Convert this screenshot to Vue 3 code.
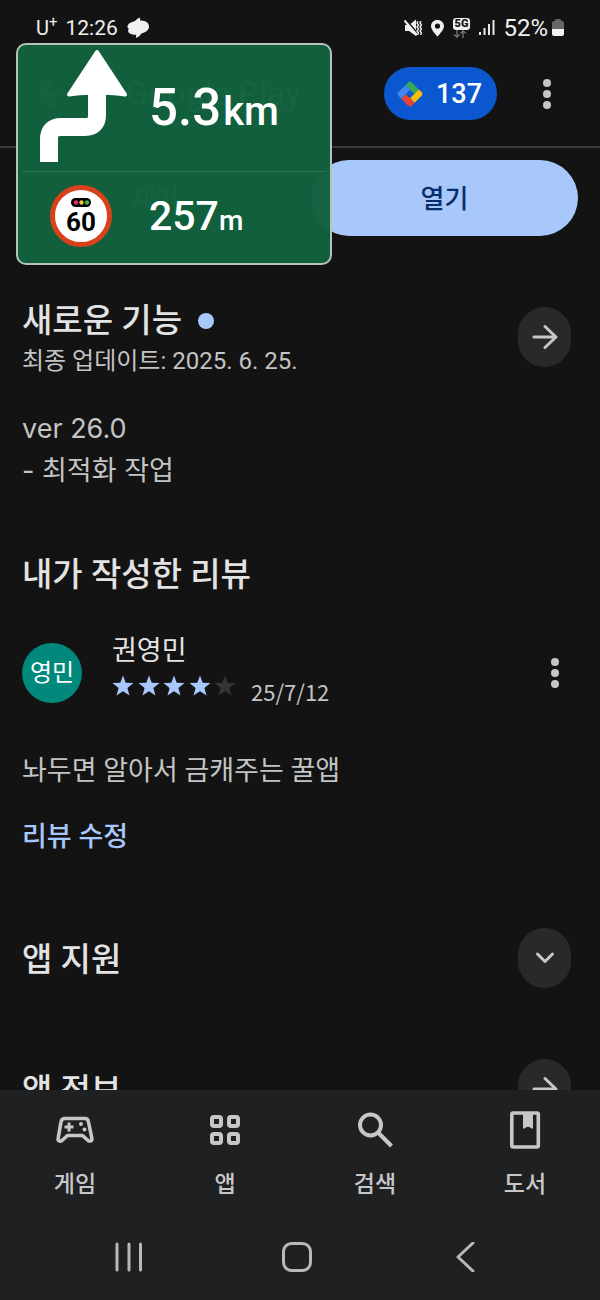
<script setup>
const stars = [true, true, true, true, false]
const tabs = [
  { id: 'games', label: '게임' },
  { id: 'apps', label: '앱' },
  { id: 'search', label: '검색' },
  { id: 'books', label: '도서' },
]
</script>

<template>
  <div class="screen">
    <div class="status">
      <div class="status-side">
        <span class="carrier">U<sup>+</sup></span>
        <span class="clock">12:26</span>
        <svg width="24" height="22" viewBox="0 0 24 22" aria-hidden="true">
          <path d="M13.500 0.500 Q14.800 2 14 3.500 C20 3 23.500 6.500 23 10 C22.500 14 18.500 15.500 15.500 16.500 Q14 19 10.500 21 Q9.500 19.500 10.300 17.800 C5 18 2 16 2 13.500 Q2 12.500 3 12 Q1 11 1.500 9 C2.500 6 6 5 9 4 Q11 1.500 13.500 0.500 Z" fill="#f0f0f0" />
        </svg>
      </div>
      <div class="status-side right">
        <svg width="18" height="18" viewBox="0 0 18 18" aria-hidden="true">
          <path d="M1 6 H5 L12 0.500 V17 L5 12 H1 Z" fill="#eee" />
          <path d="M1 0 L13 14" stroke="#131313" stroke-width="2" />
          <path d="M0.500 1.500 L13 16" stroke="#eee" stroke-width="2" />
          <path d="M14 2 l-1 2 1.500 2 -1.500 2 1.500 2 -1.500 2 1.500 2 -1 2 M17 2 l-1 2 1.500 2 -1.500 2 1.500 2 -1.500 2 1.500 2 -1 2" fill="none" stroke="#eee" stroke-width="1.400" />
        </svg>
        <svg width="15" height="18" viewBox="0 0 15 18" aria-hidden="true">
          <path d="M7.500 1 C3.700 1 1 3.700 1 7.200 C1 11 7.500 17.500 7.500 17.500 C7.500 17.500 14 11 14 7.200 C14 3.700 11.300 1 7.500 1 Z M7.500 4.500 A2.600 2.600 0 1 1 7.500 9.700 A2.600 2.600 0 1 1 7.500 4.500" fill="#f0f0f0" fill-rule="evenodd" />
        </svg>
        <div class="network">
          <span class="network-type">5G</span>
          <svg width="14" height="8" viewBox="0 0 14 8" aria-hidden="true">
            <path d="M4 0 V7 M1 4.500 L4 7.200 L6.500 4.500" fill="none" stroke="#777" stroke-width="1.300" />
            <path d="M10 8 V1 M7.500 3.500 L10 0.800 L13 3.500" fill="none" stroke="#777" stroke-width="1.300" />
          </svg>
        </div>
        <svg width="17" height="17" viewBox="0 0 17 17" aria-hidden="true">
          <path d="M2 13 V16 M6.500 9 V16 M11 5 V16 M15.500 1 V16" stroke="#e8e8e8" stroke-width="2" />
        </svg>
        <span class="percent">52%</span>
        <svg width="12" height="18" viewBox="0 0 12 18" aria-hidden="true">
          <path d="M3 1 Q3 0 4 0 H8 Q9 0 9 1 V2 H10 Q12 2 12 4 V10 H0 V4 Q0 2 2 2 H3 Z" fill="#666" />
          <path d="M0 10 H12 V15 Q12 17 10 17 H2 Q0 17 0 15 Z" fill="#f2f2f2" />
        </svg>
      </div>
    </div>

    <header class="header">
      <button class="icon-button" aria-label="뒤로">
        <svg width="22" height="30" viewBox="0 0 22 30" aria-hidden="true">
          <path d="M21 15 H3 M15 2 L2 15 L15 28" fill="none" stroke="#c6c6c6" stroke-width="3" />
        </svg>
      </button>
      <span class="brand">Google Play</span>
      <button class="points">
        <svg width="28" height="28" viewBox="0 0 28 28" aria-hidden="true">
          <g transform="rotate(45 14 14)">
            <path d="M4.500 11 V7 Q4.500 4.500 7 4.500 H17 V11 Z" fill="#34a853" />
            <path d="M17 4.500 H21 Q23.500 4.500 23.500 7 V17 H17 Z" fill="#fbbc04" />
            <path d="M11 17 H23.500 V21 Q23.500 23.500 21 23.500 H11 Z" fill="#ea4335" />
            <path d="M4.500 11 H11 V23.500 H7 Q4.500 23.500 4.500 21 Z" fill="#4285f4" />
          </g>
        </svg>
        <span>137</span>
      </button>
      <button class="icon-button more" aria-label="옵션 더보기">
        <svg width="8" height="32" viewBox="0 0 8 32" fill="#c6c6c6" aria-hidden="true">
          <circle cx="4" cy="5" r="4" /><circle cx="4" cy="16" r="4" /><circle cx="4" cy="27" r="4" />
        </svg>
      </button>
    </header>

    <main class="content">
      <div class="actions">
        <button class="action outline">제거</button>
        <button class="action filled">열기</button>
      </div>

      <section class="news">
        <div class="row">
          <div class="heading">
            <h2 class="with-dot">새로운 기능 <span class="dot"></span></h2>
            <p class="updated">최종 업데이트: 2025. 6. 25.</p>
          </div>
          <button class="round" aria-label="새로운 기능 더보기">
            <svg width="26" height="26" viewBox="0 0 26 26" aria-hidden="true">
              <path d="M2 13 H23 M13 2.500 L24 13 L13 23.500" class="stroke" />
            </svg>
          </button>
        </div>
        <p class="notes">ver 26.0<br />- 최적화 작업</p>
      </section>

      <section class="review">
        <h2>내가 작성한 리뷰</h2>
        <div class="reviewer">
          <div class="avatar">영민</div>
          <div class="who">
            <div class="name">권영민</div>
            <div class="rating">
              <div class="stars" role="img" aria-label="별표 5개 중 4개">
                <svg v-for="(on, i) in stars" :key="i" :class="{ off: !on }" width="22" height="22" viewBox="0 0 22 22">
                  <path d="M11 0.500 L13.700 7.800 L21.500 8.100 L15.400 12.900 L17.500 20.500 L11 16.200 L4.500 20.500 L6.600 12.900 L0.500 8.100 L8.300 7.800 Z" />
                </svg>
              </div>
              <span class="date">25/7/12</span>
            </div>
          </div>
          <button class="icon-button" aria-label="리뷰 옵션">
            <svg width="8" height="32" viewBox="0 0 8 32" fill="#c6c6c6" aria-hidden="true">
              <circle cx="4" cy="5" r="4" /><circle cx="4" cy="16" r="4" /><circle cx="4" cy="27" r="4" />
            </svg>
          </button>
        </div>
        <p class="comment">놔두면 알아서 금캐주는 꿀앱</p>
        <a class="edit" href="#">리뷰 수정</a>
      </section>

      <section class="row support">
        <h2 class="heading">앱 지원</h2>
        <button class="round" aria-label="앱 지원 펼치기">
          <svg width="26" height="26" viewBox="0 0 26 26" aria-hidden="true">
            <path d="M5.500 9 L13 16.500 L20.500 9" class="stroke" />
          </svg>
        </button>
      </section>
      <section class="row info">
        <h2 class="heading">앱 정보</h2>
        <button class="round" aria-label="앱 정보 더보기">
          <svg width="26" height="26" viewBox="0 0 26 26" aria-hidden="true">
            <path d="M2 13 H23 M13 2.500 L24 13 L13 23.500" class="stroke" />
          </svg>
        </button>
      </section>
    </main>

    <footer class="bottom">
      <nav class="tabs">
        <button v-for="tab in tabs" :key="tab.id" class="tab">
          <svg width="40" height="40" viewBox="0 0 40 40" fill="none" stroke="#c7c7c9" aria-hidden="true">
            <g v-if="tab.id === 'games'">
              <path d="M10 8.500 H30 Q33 8.500 33.500 12 L36.800 28 Q37.500 31.500 34.500 31 Q33.500 31 32.500 30 L27.500 25.500 H12.500 L7.500 30 Q6 31.500 4.500 31 Q2.500 30.500 3.200 28 L6 12 Q6.500 8.500 10 8.500 Z" stroke-width="3.600" stroke-linejoin="round" />
              <path d="M9.500 17 H18.500 M14 12.500 V21.500" stroke-width="3" />
              <circle cx="26" cy="14" r="2" fill="#c7c7c9" stroke="none" />
              <circle cx="29.500" cy="19.500" r="2" fill="#c7c7c9" stroke="none" />
            </g>
            <g v-else-if="tab.id === 'apps'" stroke-width="4">
              <rect x="7" y="7" width="9" height="9" rx="2" />
              <rect x="24" y="7" width="9" height="9" rx="2" />
              <rect x="7" y="24" width="9" height="9" rx="2" />
              <rect x="24" y="24" width="9" height="9" rx="2" />
            </g>
            <g v-else-if="tab.id === 'search'" stroke-width="4">
              <circle cx="15.500" cy="15" r="10.500" />
              <path d="M23 22.500 L36.500 36" />
            </g>
            <g v-else>
              <rect x="6.800" y="3" width="26.500" height="34" rx="1.500" stroke-width="3.600" />
              <path d="M18 4 H28 V18.500 H26.500 L24.500 17 H21.500 L19.500 18.500 H18 Z" fill="#c7c7c9" stroke="none" />
            </g>
          </svg>
          <span>{{ tab.label }}</span>
        </button>
      </nav>
      <div class="system">
        <button aria-label="최근 앱">
          <svg width="30" height="30" viewBox="0 0 30 30" aria-hidden="true">
            <path d="M3 2 V28 M15 2 V28 M26.500 2 V28" class="sys" />
          </svg>
        </button>
        <button aria-label="홈">
          <svg width="30" height="30" viewBox="0 0 30 30" aria-hidden="true">
            <rect x="1.500" y="1.500" width="27" height="27" rx="8" class="sys" />
          </svg>
        </button>
        <button aria-label="뒤로 가기">
          <svg width="30" height="30" viewBox="0 0 30 30" aria-hidden="true">
            <path d="M23 1 L8 15 L23 29" class="sys" />
          </svg>
        </button>
      </div>
    </footer>

    <aside class="sign">
      <div class="sign-row turn">
        <svg width="88" height="114" viewBox="0 0 88 114" aria-hidden="true">
          <path d="M10 113 V90 Q10 78 22 78 H46 Q58 78 58 66 V42" fill="none" stroke="#fff" stroke-width="18" />
          <path d="M58 3 L86 45.500 Q70 43.500 58 43.500 Q46 43.500 30 45.500 Z" fill="#fff" stroke="#fff" stroke-width="4" stroke-linejoin="round" />
        </svg>
        <p class="distance">5.3<small>km</small></p>
      </div>
      <div class="sign-row camera">
        <div class="limit">
          <svg width="20" height="9" viewBox="0 0 20 9" aria-hidden="true">
            <rect width="20" height="9" rx="4.500" fill="#000" />
            <circle cx="5" cy="4.500" r="2.200" fill="#e32b83" />
            <circle cx="10.500" cy="4.500" r="2.200" fill="#f2c231" />
            <circle cx="16" cy="4.500" r="2.200" fill="#3fb54a" />
          </svg>
          <span>60</span>
        </div>
        <p class="distance near">257<small>m</small></p>
      </div>
    </aside>
  </div>
</template>

<style>
body {
  background: #131313;
}
</style>

<style scoped>
.screen {
  position: relative;
  display: flex;
  flex-direction: column;
  height: 100vh;
  overflow: hidden;
  background: #131313;
  color: #e3e3e3;
  font-family: Roboto, "Noto Sans CJK KR", sans-serif;
}
h2,
p {
  margin: 0;
}
button {
  margin: 0;
  padding: 0;
  border: 0;
  background: none;
  color: inherit;
  font: inherit;
}
svg {
  display: block;
  flex: none;
}
.status {
  display: flex;
  justify-content: space-between;
  align-items: center;
  height: 55px;
  padding: 0 36px;
  font-size: 22px;
  color: #f0f0f0;
}
.status-side {
  display: flex;
  align-items: center;
  gap: 8px;
}
.carrier {
  font-size: 20px;
}
.carrier sup {
  font-size: 15px;
  line-height: 0;
}
.clock {
  font-size: 21px;
}
.right svg:last-child {
  margin-left: -4px;
}
.percent {
  font-size: 24px;
}
.network {
  display: flex;
  flex-direction: column;
  align-items: center;
}
.network-type {
  padding: 0 2px;
  border-radius: 3px;
  background: #f0f0f0;
  color: #131313;
  font-size: 11px;
  font-weight: 900;
  line-height: 12px;
}
.header {
  display: flex;
  align-items: center;
  height: 93px;
  padding: 0 22px 14px 38px;
  border-bottom: 2px solid #3a3a3a;
  box-sizing: border-box;
}
.brand {
  flex: 1;
  padding-left: 66px;
  font-size: 33px;
}
.points {
  display: flex;
  align-items: center;
  gap: 12px;
  height: 53px;
  padding: 0 15px 0 12px;
  border-radius: 27px;
  background: #0b57d0;
  color: #fff;
  font-size: 27px;
  font-weight: 500;
}
.icon-button {
  display: flex;
  justify-content: center;
}
.more {
  width: 60px;
  margin: 0 1px 0 20px;
}
.content {
  flex: 1;
  min-height: 0;
  overflow: hidden;
  padding: 12px 22px 0;
}
.actions {
  display: grid;
  grid-template-columns: 1fr 1fr;
  gap: 22px;
}
.action {
  height: 76px;
  padding-bottom: 4px;
  border-radius: 38px;
  font-size: 26px;
  font-weight: 500;
}
.outline {
  color: #a8c7fa;
}
.filled {
  background: #a8c7fa;
  color: #062e6f;
}
.row {
  display: flex;
  justify-content: space-between;
  align-items: center;
  padding-right: 7px;
}
.heading {
  padding-top: 4px;
}
h2 {
  font-size: 33px;
  font-weight: 500;
  line-height: 44px;
}
.news {
  margin-top: 59px;
}
.with-dot {
  display: flex;
  align-items: center;
  gap: 16px;
}
.dot {
  width: 16px;
  height: 16px;
  border-radius: 50%;
  background: #a8c7fa;
}
.updated {
  color: #c4c4c4;
  font-size: 24px;
  line-height: 36px;
}
.round {
  display: flex;
  justify-content: center;
  align-items: center;
  width: 53px;
  height: 60px;
  border-radius: 27px;
  background: #28292b;
}
.stroke {
  fill: none;
  stroke: #c7c7c7;
  stroke-width: 3;
  stroke-linecap: round;
  stroke-linejoin: round;
}
.notes {
  margin-top: 29px;
  color: #c4c4c4;
  font-family: Inter, "Noto Sans CJK KR", sans-serif;
  font-size: 27px;
  line-height: 42px;
}
.review {
  margin-top: 61px;
}
.reviewer {
  display: flex;
  align-items: center;
  margin-top: 36px;
  padding-right: 19px;
}
.avatar {
  width: 60px;
  height: 60px;
  margin-top: 4px;
  border-radius: 50%;
  background: #00897b;
  color: #fff;
  font-size: 24px;
  line-height: 60px;
  text-align: center;
}
.reviewer .icon-button {
  margin-top: 4px;
}
.who {
  flex: 1;
  padding-left: 30px;
}
.name {
  font-size: 27px;
  line-height: 36px;
}
.rating {
  display: flex;
  align-items: flex-start;
  gap: 15px;
  height: 40px;
  padding-top: 6px;
  box-sizing: border-box;
}
.stars {
  display: flex;
  justify-content: space-between;
  width: 124px;
  fill: #a8c7fa;
}
.off {
  fill: #333435;
}
.date {
  color: #c4c4c4;
  font-family: "Noto Sans CJK KR", sans-serif;
  font-size: 22px;
  line-height: 32px;
}
.comment {
  margin-top: 42px;
  color: #c4c4c4;
  font-size: 27px;
  line-height: 40px;
}
.edit {
  display: block;
  margin-top: 26px;
  color: #a8c7fa;
  font-size: 27px;
  font-weight: 500;
  line-height: 40px;
  text-decoration: none;
}
.support {
  margin-top: 71px;
}
.info {
  margin-top: 71px;
}
.bottom {
  background: #1f2022;
}
.tabs {
  display: grid;
  grid-template-columns: repeat(4, 1fr);
  height: 130px;
}
.tab {
  display: flex;
  flex-direction: column;
  align-items: center;
  gap: 18px;
  padding-top: 20px;
  color: #c7c7c9;
  font-size: 23px;
  font-weight: 500;
  line-height: 34px;
}
.system {
  display: grid;
  grid-template-columns: repeat(3, 1fr);
  height: 80px;
  padding: 0 51px 0 45px;
}
.system button {
  display: flex;
  justify-content: center;
  padding-top: 22px;
}
.sys {
  fill: none;
  stroke: #b8b8b8;
  stroke-width: 3;
  stroke-linecap: round;
  stroke-linejoin: round;
}
.sign {
  position: absolute;
  top: 43px;
  left: 16px;
  width: 316px;
  box-sizing: border-box;
  padding: 0 4px;
  border: 2px solid #b5c4b9;
  border-radius: 10px;
  background: rgba(17, 97, 62, 0.98);
  color: #fff;
}
.sign-row {
  display: flex;
  align-items: center;
}
.turn {
  height: 126px;
  padding-left: 17px;
  border-bottom: 1px solid #2c7552;
}
.turn svg {
  margin-top: -4px;
}
.turn .distance {
  padding: 4px 0 0 22px;
}
.distance {
  font-size: 51px;
  font-weight: 500;
  line-height: 60px;
}
.distance small {
  margin-left: 2px;
  font-size: 40px;
}
.camera {
  gap: 37px;
  height: 91px;
  padding-left: 28px;
}
.near {
  padding-top: 2px;
  font-size: 41px;
}
.near small {
  margin-left: 0;
  font-size: 28px;
}
.limit {
  display: flex;
  flex-direction: column;
  align-items: center;
  width: 62px;
  height: 62px;
  box-sizing: border-box;
  margin-bottom: 4px;
  padding-top: 8px;
  border: 5px solid #d8421b;
  border-radius: 50%;
  background: #fff;
  color: #000;
  font-size: 26px;
  font-weight: 700;
  line-height: 30px;
}
</style>
